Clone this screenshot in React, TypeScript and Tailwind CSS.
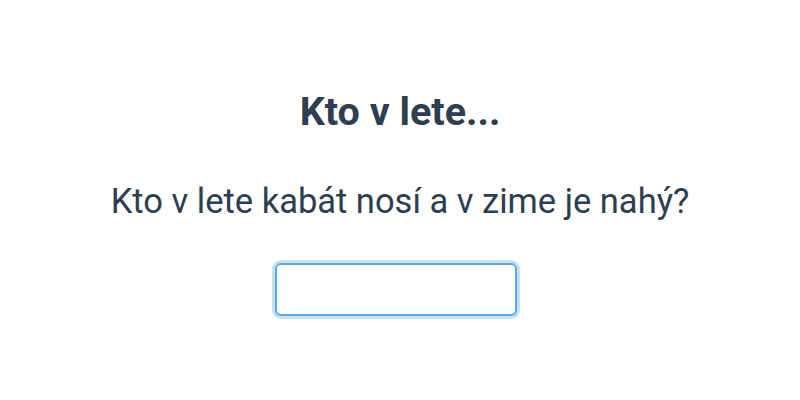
import React from 'react';

export default function App() {
  return (
    <div className="w-[800px] h-[400px] bg-white flex flex-col items-center text-[#2c3e50] font-['Roboto',sans-serif]">
      <h1 className="mt-[88px] text-[39.5px] leading-[48px] font-bold">Kto v lete...</h1>
      <p className="mt-[45px] text-[34.5px] leading-[40px]">Kto v lete kabát nosí a v zime je nahý?</p>
      <input
        type="text"
        className="mt-[42px] mr-[8px] w-[242px] h-[53px] rounded-[6px] border-2 border-[#5aa9e6] outline-none ring-[3px] ring-[#c7e1f7] bg-white"
      />
    </div>
  );
}
